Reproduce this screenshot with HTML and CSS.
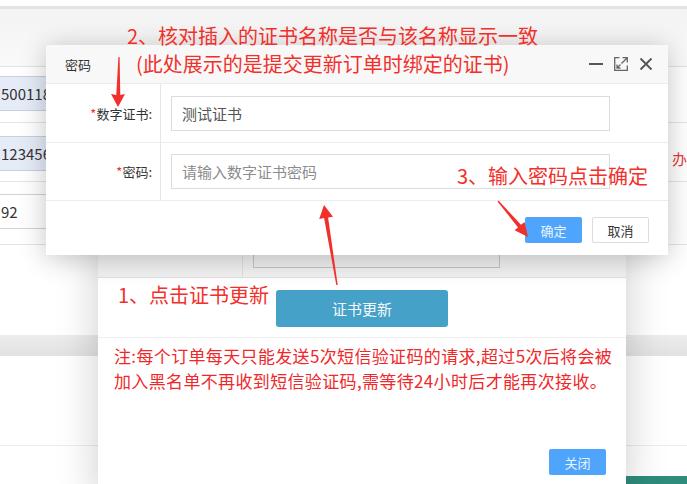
FILE: index.html
```html
<!DOCTYPE html>
<html lang="zh-CN">
<head>
    <meta charset="UTF-8">
    <meta name="viewport" content="width=device-width, initial-scale=1.0">
    <title>证书更新</title>
    <link rel="stylesheet" href="styles.css">
</head>
<body>
    <div class="screen">
        <!-- page under the dialogs -->
        <div class="page">
            <div class="page-top"></div>
            <div class="page-head"></div>
            <div class="page-row row-a">
                <div class="page-input blue">500118</div>
            </div>
            <div class="page-row row-b">
                <div class="page-input blue">123456</div>
                <span class="page-hint">办人</span>
            </div>
            <div class="page-row row-c">
                <div class="page-input">92</div>
            </div>
            <div class="page-gap"></div>
            <div class="page-band"></div>
            <div class="page-gap low"></div>
            <div class="page-foot"><div class="page-green"></div></div>
        </div>

        <!-- certificate update dialog -->
        <div class="dlg dlg-back">
            <div class="bd-row">
                <div class="bd-label">证书编号:</div>
                <div class="bd-input">20001234</div>
            </div>
            <div class="bd-row action">
                <button class="btn-update">证书更新</button>
            </div>
            <div class="bd-note">
                <p>注:每个订单每天只能发送5次短信验证码的请求,超过5次后将会被</p>
                <p>加入黑名单不再收到短信验证码,需等待24小时后才能再次接收。</p>
            </div>
            <div class="bd-foot">
                <button class="btn btn-blue">关闭</button>
            </div>
        </div>

        <!-- password dialog -->
        <div class="dlg dlg-front">
            <div class="fd-title">
                <span>密码</span>
                <div class="fd-tools">
                    <svg width="14" height="14" viewBox="0 0 14 14"><path d="M0 7h14" stroke="#555" stroke-width="2"/></svg>
                    <svg width="14" height="14" viewBox="0 0 14 14" fill="none" stroke="#666" stroke-width="1.3">
                        <path d="M5.5 0.7H0.7v12.6h12.6V8.5"/>
                        <path d="M8.5 0.7h4.8v4.8M13.3 0.7L7.5 6.5"/>
                        <path d="M3 7.5v3.5h3.5M3 11l3.5-3.5"/>
                    </svg>
                    <svg width="14" height="14" viewBox="0 0 14 14"><path d="M1.5 1.5l11 11M12.5 1.5l-11 11" stroke="#555" stroke-width="1.8"/></svg>
                </div>
            </div>
            <div class="fd-row">
                <div class="fd-label"><i>*</i>数字证书:</div>
                <div class="fd-input">测试证书</div>
            </div>
            <div class="fd-row">
                <div class="fd-label"><i>*</i>密码:</div>
                <div class="fd-input empty">请输入数字证书密码</div>
            </div>
            <div class="fd-foot">
                <button class="btn btn-blue">确定</button>
                <button class="btn btn-white">取消</button>
            </div>
        </div>

        <!-- red hints drawn over the screenshot -->
        <div class="notes">
            <div class="note n2a">2、核对插入的证书名称是否与该名称显示一致</div>
            <div class="note n2b">(此处展示的是提交更新订单时绑定的证书)</div>
            <div class="note n3">3、输入密码点击确定</div>
            <div class="note n1">1、点击证书更新</div>
            <svg class="arrows" width="687" height="484" viewBox="0 0 687 484">
                <polygon points="118.4,57 119.6,57 120.3,95 125,94 118,107 111,94 116.3,95" fill="#f2302b"/>
                <polygon points="337.7,284.9 328.1,217.5 333,216.7 324,205 319.2,218.9 324.1,218.1 336.3,285.1" fill="#f2302b"/>
                <polygon points="498.5,200.6 521,224.8 524.5,221.9 528,237 514.6,230.3 518,227.4 497.5,201.4" fill="#f2302b"/>
            </svg>
        </div>
    </div>
</body>
</html>
```

FILE: styles.css
```css
* {
    box-sizing: border-box;
}
body {
    margin: 0;
    font-family: "Noto Sans CJK SC", "Microsoft YaHei", sans-serif;
    background-color: #ffffff;
}
p {
    margin: 0;
}
button {
    font-family: inherit;
    border: none;
    padding: 0;
    cursor: pointer;
}
.screen {
    position: relative;
    width: 687px;
    height: 484px;
    overflow: hidden;
}

/* background page */
.page {
    display: flex;
    flex-direction: column;
}
.page-top {
    height: 9px;
    border-bottom: 3px solid #e4e4e4;
}
.page-head {
    height: 58px;
    background: linear-gradient(#f3f3f3, #fafafa);
    border-bottom: 1px solid #e2e2e2;
}
.page-row {
    display: flex;
    border-bottom: 1px solid #e4e4e4;
}
.row-a {
    height: 56px;
    padding-top: 9px;
}
.row-b {
    height: 59px;
    padding-top: 13px;
}
.row-c {
    height: 63px;
    padding-top: 12px;
}
.page-input {
    width: 320px;
    height: 35px;
    margin-left: -12px;
    padding-left: 12px;
    line-height: 33px;
    font-size: 15px;
    color: #333;
    border: 1px solid #d2d2d2;
    background-color: #fff;
}
.page-input.blue {
    background-color: #e5ecf8;
    border-color: #c7d0de;
}
.page-hint {
    margin-left: auto;
    width: 15px;
    white-space: nowrap;
    align-self: center;
    font-size: 15px;
    color: #e8393a;
}
.page-gap {
    height: 90px;
}
.page-gap.low {
    height: 89px;
}
.page-band {
    height: 21px;
    background: linear-gradient(#ececec, #e2e2e2);
}
.page-foot {
    height: 39px;
    border-top: 1px solid #ececec;
    display: flex;
    justify-content: flex-end;
    align-items: flex-end;
}
.page-green {
    width: 61px;
    height: 8px;
    background-color: #2e8c7c;
}

/* dialogs */
.dlg {
    position: absolute;
    background-color: #fff;
}
.dlg-back {
    left: 98px;
    top: 222px;
    width: 528px;
    height: 280px;
    box-shadow: 0 0 40px rgba(0, 0, 0, 0.2);
}
.bd-row {
    display: flex;
    height: 56px;
    border-bottom: 1px solid #e0e0e0;
    background-color: #f1f1f1;
}
.bd-label {
    width: 145px;
    padding: 0 16px 10px 0;
    display: flex;
    align-items: center;
    justify-content: flex-end;
    font-size: 13px;
    color: #444;
    border-right: 1px solid #dedede;
}
.bd-input {
    width: 247px;
    height: 40px;
    margin: 6px 0 0 10px;
    padding-left: 10px;
    font-size: 13px;
    line-height: 32px;
    color: #555;
    border: 1px solid #c4c4c4;
    background-color: #efefef;
}
.bd-row.action {
    height: 60px;
    padding: 12px 0 0 178px;
    border-bottom-color: #eeeeee;
    background-color: #fff;
}
.btn-update {
    width: 172px;
    height: 37px;
    border-radius: 3px;
    font-size: 15px;
    color: #f2f8fb;
    background-color: #45a1c8;
}
.bd-note {
    height: 111px;
    padding: 5px 0 0 16px;
    font-size: 17px;
    line-height: 25px;
    letter-spacing: 0.35px;
    color: #f0282a;
    white-space: nowrap;
}
.bd-foot {
    display: flex;
    justify-content: flex-end;
    padding-right: 20px;
}

.btn {
    width: 57px;
    height: 26px;
    border-radius: 2px;
    font-size: 13px;
}
.btn-blue {
    color: #eaf4ff;
    background-color: #4ea5fb;
}
.btn-white {
    color: #333;
    background-color: #fff;
    border: 1px solid #dcdcdc;
}

.dlg-front {
    left: 46px;
    top: 45px;
    width: 622px;
    height: 210px;
    box-shadow: 0 3px 26px rgba(0, 0, 0, 0.24);
}
.fd-title {
    display: flex;
    align-items: center;
    justify-content: space-between;
    height: 39px;
    padding: 0 15px 0 19px;
    font-size: 13px;
    color: #333;
    background-color: #f8f8f8;
    border-bottom: 1px solid #ececec;
}
.fd-tools {
    display: flex;
    align-items: center;
    gap: 11px;
}
.fd-tools svg {
    display: block;
}
.fd-row {
    display: flex;
    align-items: center;
    height: 59px;
    border-bottom: 1px solid #ececec;
}
.fd-row + .fd-row {
    height: 58px;
}
.fd-label {
    align-self: stretch;
    width: 115px;
    padding-right: 8px;
    display: flex;
    align-items: center;
    justify-content: flex-end;
    font-size: 13px;
    color: #333;
    border-right: 1px solid #e6e6e6;
}
.fd-label i {
    font-style: normal;
    color: #e33;
}
.fd-input {
    width: 439px;
    height: 35px;
    margin-left: 10px;
    padding-left: 10px;
    font-size: 15px;
    line-height: 33px;
    color: #555;
    border: 1px solid #dcdcdc;
}
.fd-input.empty {
    color: #8c8c8c;
}
.fd-foot {
    display: flex;
    justify-content: flex-end;
    gap: 10px;
    padding: 16px 19px 0 0;
}

/* annotation layer */
.notes {
    position: absolute;
    left: 0;
    top: 0;
    width: 687px;
    height: 484px;
    pointer-events: none;
}
.note {
    position: absolute;
    font-size: 20px;
    line-height: 28px;
    color: #f2302b;
    white-space: nowrap;
}
.n2a {
    left: 127px;
    top: 22px;
}
.n2b {
    left: 136px;
    top: 50px;
}
.n3 {
    left: 457px;
    top: 162px;
}
.n1 {
    left: 118px;
    top: 281px;
}
.arrows {
    position: absolute;
    left: 0;
    top: 0;
}
```
